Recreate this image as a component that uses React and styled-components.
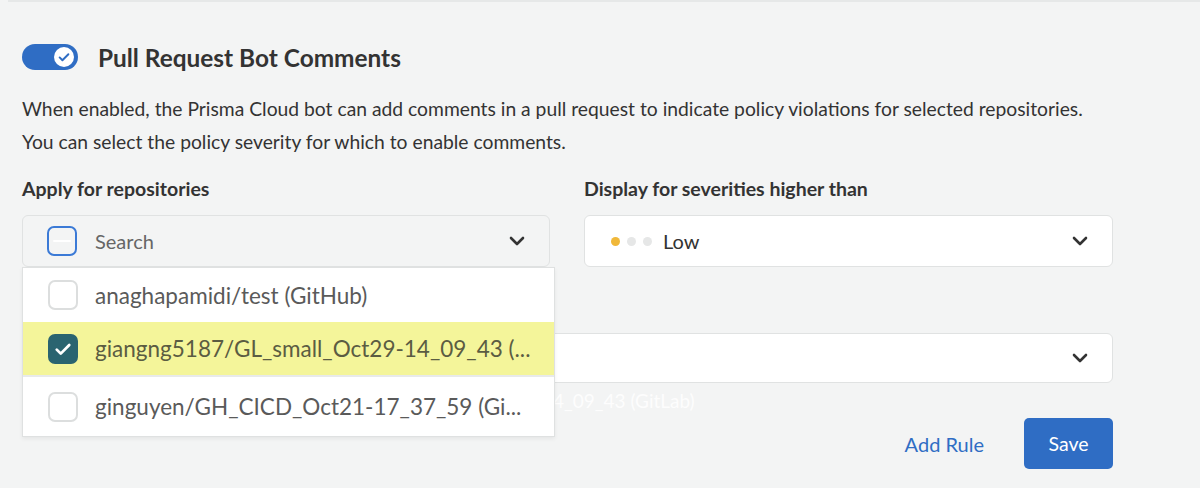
import React from "react";
import styled, { createGlobalStyle } from "styled-components";

const Global = createGlobalStyle`
  body {
    margin: 0;
    background: #f3f4f4;
    font-family: Lato, "Open Sans", sans-serif;
    color: #333;
  }
`;

const TopRule = styled.div`
  margin-left: 8px;
  height: 2px;
  background: #e6e8e8;
`;

const Page = styled.div`
  padding: 42px 87px 0 22px;
`;

const Header = styled.div`
  display: flex;
  align-items: center;
  gap: 20px;
  height: 26px;
`;

const Toggle = styled.div`
  width: 56px;
  height: 26px;
  border-radius: 13px;
  background: #2f6dc4;
  display: flex;
  align-items: center;
  justify-content: flex-end;
  padding: 0 4px;
  box-sizing: border-box;
`;

const Knob = styled.div`
  width: 20px;
  height: 20px;
  border-radius: 50%;
  background: #fff;
  display: flex;
  align-items: center;
  justify-content: center;
`;

const Title = styled.h2`
  margin: 0;
  font-size: 24.4px;
  font-weight: 700;
  color: #333;
`;

const Desc = styled.p`
  margin: 22px 0 0;
  font-size: 19.3px;
  line-height: 33px;
  color: #333;
`;

const Grid = styled.div`
  display: grid;
  grid-template-columns: 528px 529px;
  column-gap: 34px;
  margin-top: 21px;
`;

const Field = styled.div`
  position: relative;
  display: flex;
  flex-direction: column;
  gap: 16px;
`;

const Label = styled.div`
  font-size: 19.5px;
  font-weight: 700;
  line-height: 20px;
`;

const SelectBox = styled.div`
  height: ${(p) => p.$h || 52}px;
  box-sizing: border-box;
  border: 1.5px solid #e0e2e2;
  border-radius: 6px;
  background: ${(p) => (p.$muted ? "#f3f4f4" : "#fff")};
  display: flex;
  align-items: center;
  padding: 0 24px 0 ${(p) => p.$pl || 24}px;
  gap: ${(p) => p.$gap || 16}px;
`;

const Spacer = styled.div`
  flex: 1;
`;

const Box = styled.div`
  width: 30px;
  height: 30px;
  box-sizing: border-box;
  border-radius: 7px;
  border: 2px solid ${(p) => (p.$blue ? "#3b7ad6" : p.$checked ? "#2a6470" : "#dcdede")};
  background: ${(p) => (p.$blue ? "transparent" : p.$checked ? "#2a6470" : "#fff")};
  display: flex;
  align-items: center;
  justify-content: center;
  flex-shrink: 0;
`;

const Dash = styled.div`
  width: 18px;
  height: 2px;
  background: #fff;
  border-radius: 1px;
`;

const SearchText = styled.span`
  font-size: 20px;
  color: #666;
`;

const Dots = styled.div`
  display: flex;
  gap: 7px;
`;

const Dot = styled.span`
  width: 9px;
  height: 9px;
  border-radius: 50%;
  background: ${(p) => p.$c};
`;

const Value = styled.span`
  font-size: 20px;
  color: #333;
`;

const Dropdown = styled.div`
  position: absolute;
  top: 88px;
  left: 0;
  width: 531px;
  background: #fff;
  border: 1.5px solid #dfe1e1;
  box-shadow: 0 2px 4px rgba(0, 0, 0, 0.06);
  z-index: 2;
`;

const Option = styled.div`
  height: ${(p) => p.$h}px;
  display: flex;
  align-items: center;
  gap: 17px;
  padding-left: 25px;
  background: ${(p) => (p.$hl ? "#f4f59a" : "#fff")};
  border-bottom: ${(p) => (p.$sep ? "2px solid #e8eaea" : "none")};
  font-size: 22.5px;
  color: ${(p) => (p.$hl ? "#5b5c42" : "#5a5a5a")};
  white-space: nowrap;
`;

const Wide = styled.div`
  margin-top: 66px;
`;

const Ghost = styled.div`
  margin-top: 7px;
  padding-left: 531px;
  font-size: 19px;
  line-height: 22px;
  color: rgba(255, 255, 255, 0.85);
`;

const Actions = styled.div`
  display: flex;
  justify-content: flex-end;
  align-items: center;
  gap: 40px;
  margin-top: 6px;
`;

const LinkBtn = styled.span`
  font-size: 20px;
  color: #2f6dc4;
`;

const SaveBtn = styled.button`
  width: 89px;
  height: 51px;
  border: none;
  border-radius: 5px;
  background: #2f6dc4;
  color: #fff;
  font-family: Lato, sans-serif;
  font-size: 19.5px;
`;

const Chevron = () => (
  <svg width="16" height="10" viewBox="0 0 16 10">
    <path d="M2 2l6 6 6-6" fill="none" stroke="#333" strokeWidth="2.6" strokeLinecap="round" strokeLinejoin="round" />
  </svg>
);

const Check = ({ color, size }) => (
  <svg width={size} height={size} viewBox="0 0 16 16">
    <path d="M3 8.5l3.2 3.2L13 4.8" fill="none" stroke={color} strokeWidth="2.2" strokeLinecap="round" strokeLinejoin="round" />
  </svg>
);

const repos = [
  { name: "anaghapamidi/test (GitHub)", h: 54 },
  { name: "giangng5187/GL_small_Oct29-14_09_43 (...", h: 53, checked: true, hl: true, sep: true },
  { name: "ginguyen/GH_CICD_Oct21-17_37_59 (Gi...", h: 59 },
];

export default function App() {
  return (
    <>
      <Global />
      <TopRule />
      <Page>
        <Header>
          <Toggle>
            <Knob>
              <Check color="#2f6dc4" size={14} />
            </Knob>
          </Toggle>
          <Title>Pull Request Bot Comments</Title>
        </Header>
        <Desc>
          When enabled, the Prisma Cloud bot can add comments in a pull request to indicate policy violations for selected repositories.
          <br />
          You can select the policy severity for which to enable comments.
        </Desc>
        <Grid>
          <Field>
            <Label>Apply for repositories</Label>
            <SelectBox $muted $gap={18}>
              <Box $blue>
                <Dash />
              </Box>
              <SearchText>Search</SearchText>
              <Spacer />
              <Chevron />
            </SelectBox>
            <Dropdown>
              {repos.map((r) => (
                <Option key={r.name} $h={r.h} $hl={r.hl} $sep={r.sep}>
                  <Box $checked={r.checked}>{r.checked && <Check color="#fff" size={20} />}</Box>
                  {r.name}
                </Option>
              ))}
            </Dropdown>
          </Field>
          <Field>
            <Label>Display for severities higher than</Label>
            <SelectBox $pl={26} $gap={11}>
              <Dots>
                <Dot $c="#f0b83a" />
                <Dot $c="#e6e7e7" />
                <Dot $c="#e6e7e7" />
              </Dots>
              <Value>Low</Value>
              <Spacer />
              <Chevron />
            </SelectBox>
          </Field>
        </Grid>
        <Wide>
          <SelectBox $h={50}>
            <Spacer />
            <Chevron />
          </SelectBox>
        </Wide>
        <Ghost>4_09_43 (GitLab)</Ghost>
        <Actions>
          <LinkBtn>Add Rule</LinkBtn>
          <SaveBtn>Save</SaveBtn>
        </Actions>
      </Page>
    </>
  );
}
